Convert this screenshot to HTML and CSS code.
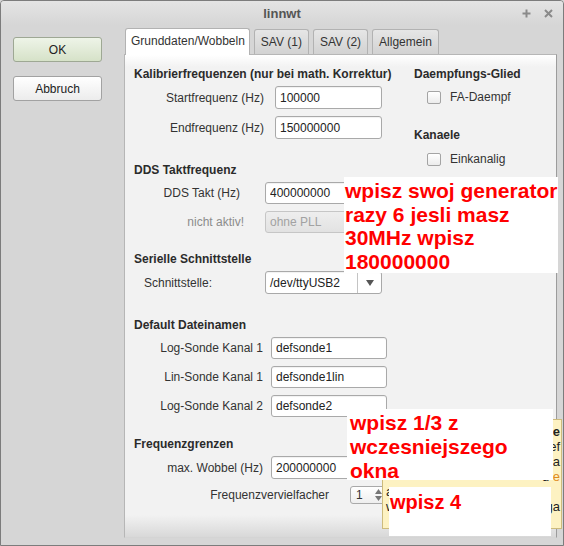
FILE: index.html
```html
<!DOCTYPE html>
<html lang="de">
<head>
    <meta charset="UTF-8">
    <title>linnwt</title>
    <link rel="stylesheet" href="styles.css">
</head>
<body>

<div class="window">
    <div class="titlebar">
        <span class="title">linnwt</span>
        <span class="tb-btns">
            <svg width="9" height="9" viewBox="0 0 9 9"><path d="M4.5 0.5v8M0.5 4.5h8" stroke="#8a8a8a" stroke-width="2"/></svg>
            <svg width="9" height="9" viewBox="0 0 9 9"><path d="M1 1l7 7M8 1l-7 7" stroke="#8a8a8a" stroke-width="2"/></svg>
        </span>
    </div>

    <div class="body">
        <div class="sidebar">
            <button class="btn btn-ok">OK</button>
            <button class="btn">Abbruch</button>
        </div>

        <div class="tabs-area">
            <div class="tabbar">
                <div class="tab active">Grunddaten/Wobbeln</div>
                <div class="tab">SAV (1)</div>
                <div class="tab">SAV (2)</div>
                <div class="tab">Allgemein</div>
            </div>

            <div class="pane">
                <div class="col-left">
                    <section class="group g-cal">
                        <h3>Kalibrierfrequenzen (nur bei math. Korrektur)</h3>
                        <div class="row"><label>Startfrequenz (Hz)</label><input class="field" type="text" value="100000"></div>
                        <div class="row"><label>Endfrequenz (Hz)</label><input class="field" type="text" value="150000000"></div>
                    </section>

                    <section class="group g-dds">
                        <h3>DDS Taktfrequenz</h3>
                        <div class="row"><label>DDS Takt (Hz)</label><input class="field" type="text" value="400000000"></div>
                        <div class="row"><label class="lbl-off">nicht aktiv!</label><div class="field combo disabled"><span>ohne PLL</span></div></div>
                    </section>

                    <section class="group g-ser">
                        <h3>Serielle Schnittstelle</h3>
                        <div class="row"><label>Schnittstelle:</label>
                            <div class="field combo">
                                <span>/dev/ttyUSB2</span>
                                <span class="arrow"><svg width="8" height="6" viewBox="0 0 8 6"><polygon points="0,0 8,0 4,6" fill="#555"/></svg></span>
                            </div>
                        </div>
                    </section>

                    <section class="group g-files">
                        <h3>Default Dateinamen</h3>
                        <div class="row"><label>Log-Sonde Kanal 1</label><input class="field" type="text" value="defsonde1"></div>
                        <div class="row"><label>Lin-Sonde Kanal 1</label><input class="field" type="text" value="defsonde1lin"></div>
                        <div class="row"><label>Log-Sonde Kanal 2</label><input class="field" type="text" value="defsonde2"></div>
                    </section>

                    <section class="group g-lim">
                        <h3>Frequenzgrenzen</h3>
                        <div class="row"><label>max. Wobbel (Hz)</label><input class="field" type="text" value="200000000"></div>
                        <div class="row row-spin"><label>Frequenzvervielfacher</label>
                            <div class="spin">
                                <span>1</span>
                                <span class="spin-arrows">
                                    <svg width="7" height="5" viewBox="0 0 7 5"><polygon points="0,5 7,5 3.5,0" fill="#777"/></svg>
                                    <svg width="7" height="5" viewBox="0 0 7 5"><polygon points="0,0 7,0 3.5,5" fill="#777"/></svg>
                                </span>
                            </div>
                        </div>
                    </section>
                </div>

                <div class="col-right">
                    <h3>Daempfungs-Glied</h3>
                    <div class="check"><span class="box"></span>FA-Daempf</div>
                    <h3 class="h-gap">Kanaele</h3>
                    <div class="check check-2"><span class="box"></span>Einkanalig</div>
                </div>
            </div>
        </div>
    </div>

    <!-- Tooltip vom Frequenzvervielfacher, meist verdeckt -->
    <div class="tooltip">
        <div class="tip-line"><b>ne</b></div>
        <div class="tip-line">ef</div>
        <div class="tip-line">da</div>
        <div class="tip-line">d <span class="tip-hl">e</span></div>
        <div class="tip-line tip-left">angegeben. Das "EXT" wird</div>
        <div class="tip-line tip-split"><span>w</span><span>rga</span></div>
    </div>

    <!-- Notatki -->
    <div class="note note-1">wpisz swoj generator<br>razy 6 jesli masz<br>30MHz wpisz<br>180000000</div>
    <div class="note note-2">wpisz 1/3 z<br>wczesniejszego<br>okna</div>
    <div class="note note-3">wpisz 4</div>
</div>

</body>
</html>
```

FILE: styles.css
```css
* {
    box-sizing: border-box;
}
body {
    margin: 0;
    font-family: "Liberation Sans", Arial, sans-serif;
    font-size: 12px;
    color: #333;
    background: #d6d6d6;
}
.window {
    width: 564px;
    height: 546px;
    border: 1px solid #7c7c7c;
    border-radius: 4px 4px 0 0;
    background: #d6d6d6;
    position: relative;
    overflow: hidden;
    display: flex;
    flex-direction: column;
}

/* Titelleiste */
.titlebar {
    height: 24px;
    display: grid;
    grid-template-columns: 1fr auto 1fr;
    align-items: center;
    background: linear-gradient(#e4e4e4, #d6d6d6);
}
.title {
    grid-column: 2;
    font-weight: bold;
    font-size: 13px;
    color: #555;
}
.tb-btns {
    justify-self: end;
    display: flex;
    gap: 13px;
    padding-right: 10px;
}

.body {
    flex: 1;
    display: flex;
}

/* linke Knoepfe */
.sidebar {
    width: 123px;
    padding: 12px 0 0 12px;
    display: flex;
    flex-direction: column;
    gap: 14px;
}
.btn {
    width: 89px;
    height: 25px;
    font-family: inherit;
    font-size: 12px;
    color: #222;
    border: 1px solid #a2a2a2;
    border-radius: 3px;
    background: linear-gradient(#ffffff, #ececec);
    padding: 0;
}
.btn-ok {
    border-color: #9ea894;
    background: linear-gradient(#eef4e8, #d6e2c8);
}

/* Tabs */
.tabs-area {
    flex: 1;
    display: flex;
    flex-direction: column;
    padding-top: 2px;
    margin-right: 6px;
    margin-bottom: 7px;
}
.tabbar {
    display: flex;
    align-items: flex-end;
    gap: 4px;
    padding-left: 1px;
    height: 27px;
    position: relative;
    z-index: 1;
}
.tab {
    height: 25px;
    padding: 5px 6px 0;
    border: 1px solid #b2b2b2;
    border-bottom: none;
    border-radius: 3px 3px 0 0;
    background: linear-gradient(#e6e6e6, #d2d2d2);
    color: #333;
}
.tab.active {
    height: 27px;
    padding: 5px 4px 0 5px;
    margin-bottom: -1px;
    background: #fff;
}

.pane {
    flex: 1;
    display: flex;
    border: 1px solid #b6b6b6;
    border-right-color: #9c9c9c;
    border-bottom-color: #d4d4d4;
    background: linear-gradient(#ffffff 0, #f2f2f2 12px, #f2f2f2 calc(100% - 22px), #d8d8d8 100%);
    padding: 11px 0 0 9px;
}
.col-left {
    width: 280px;
}

h3 {
    margin: 0 0 4px;
    font-size: 12px;
    line-height: 16px;
    color: #2b2b2b;
}

/* Formularzeilen */
.row {
    display: flex;
    align-items: center;
    height: 23px;
}
.row + .row {
    margin-top: 7px;
}
.row label {
    flex: none;
    width: var(--lw);
    margin-right: var(--gap);
    text-align: right;
}
.field {
    width: var(--fw);
    height: 100%;
    font-family: inherit;
    font-size: 12px;
    color: #222;
    border: 1px solid #a9a9a9;
    border-radius: 3px;
    background: #fff;
    padding: 0 4px;
    box-shadow: inset 0 1px 1px rgba(0, 0, 0, 0.06);
}

.g-cal { --lw: 130px; --gap: 11px; --fw: 107px; }
.g-dds { --lw: 106px; --gap: 25px; --fw: 117px; margin-top: 23px; }
.g-ser { --lw: 131px; --gap: 0px; --fw: 117px; margin-top: 18px; }
.g-files { --lw: 129px; --gap: 8px; --fw: 116px; margin-top: 23px; }
.g-lim { --lw: 129px; --gap: 8px; --fw: 116px; margin-top: 19px; }

.g-dds .row,
.g-files .row {
    height: 22px;
}
.g-ser label {
    text-align: left;
    padding-left: 10px;
}
.lbl-off {
    color: #8c8c8c;
    width: 110px !important;
    margin-right: 21px !important;
}

.combo {
    display: flex;
    align-items: center;
    padding-right: 0;
}
.combo span:first-child {
    flex: 1;
}
.combo .arrow {
    width: 24px;
    height: 100%;
    border-left: 1px solid #c4c4c4;
    display: flex;
    align-items: center;
    justify-content: center;
}
.combo.disabled {
    background: linear-gradient(#eeeeee, #e2e2e2);
    border-color: #c6c6c6;
    color: #a2a2a2;
    box-shadow: none;
}

.row-spin {
    height: 18px;
}
.row-spin label {
    width: 195px;
    margin-right: 21px;
}
.spin {
    width: 36px;
    height: 100%;
    display: flex;
    align-items: center;
    justify-content: space-between;
    border: 1px solid #a9a9a9;
    border-radius: 3px;
    background: linear-gradient(#ffffff, #eeeeee);
    padding: 0 3px 0 5px;
}
.spin-arrows {
    display: flex;
    flex-direction: column;
    gap: 2px;
}
.spin-arrows svg {
    display: block;
}

/* rechte Spalte */
.col-right h3 {
    margin: 0;
}
.col-right .h-gap {
    margin-top: 23px;
}
.check {
    display: flex;
    align-items: center;
    gap: 9px;
    height: 14px;
    padding-left: 13px;
    margin-top: 8px;
}
.check-2 {
    margin-top: 9px;
}
.box {
    width: 14px;
    height: 13px;
    border: 1px solid #a4a4a4;
    border-radius: 2px;
    background: linear-gradient(#ffffff, #ececec);
}

/* Tooltip */
.tooltip {
    position: absolute;
    left: 381px;
    top: 418px;
    width: 180px;
    height: 110px;
    background: #fdf2c2;
    border: 1px solid #cdbb7c;
    font-size: 13px;
    line-height: 15px;
    color: #222;
    padding: 4px 1px 0 3px;
    overflow: hidden;
}
.tip-line {
    white-space: nowrap;
    text-align: right;
}
.tip-left {
    text-align: left;
}
.tip-split {
    display: flex;
    justify-content: space-between;
}
.tip-hl {
    color: #e08a1e;
}

/* rote Notizen */
.note {
    position: absolute;
    background: #fff;
    color: #ff0000;
    font-weight: bold;
    font-size: 21px;
    line-height: 23.5px;
    white-space: nowrap;
}
.note-1 {
    left: 343px;
    top: 176px;
    width: 214px;
    height: 96px;
    padding: 2px 0 0 1px;
}
.note-2 {
    left: 346px;
    top: 408px;
    width: 206px;
    height: 71px;
    line-height: 24px;
    padding: 2px 0 0 3px;
}
.note-3 {
    left: 388px;
    top: 486px;
    width: 162px;
    height: 49px;
    font-size: 20px;
    padding: 4px 0 0 1px;
}
```
